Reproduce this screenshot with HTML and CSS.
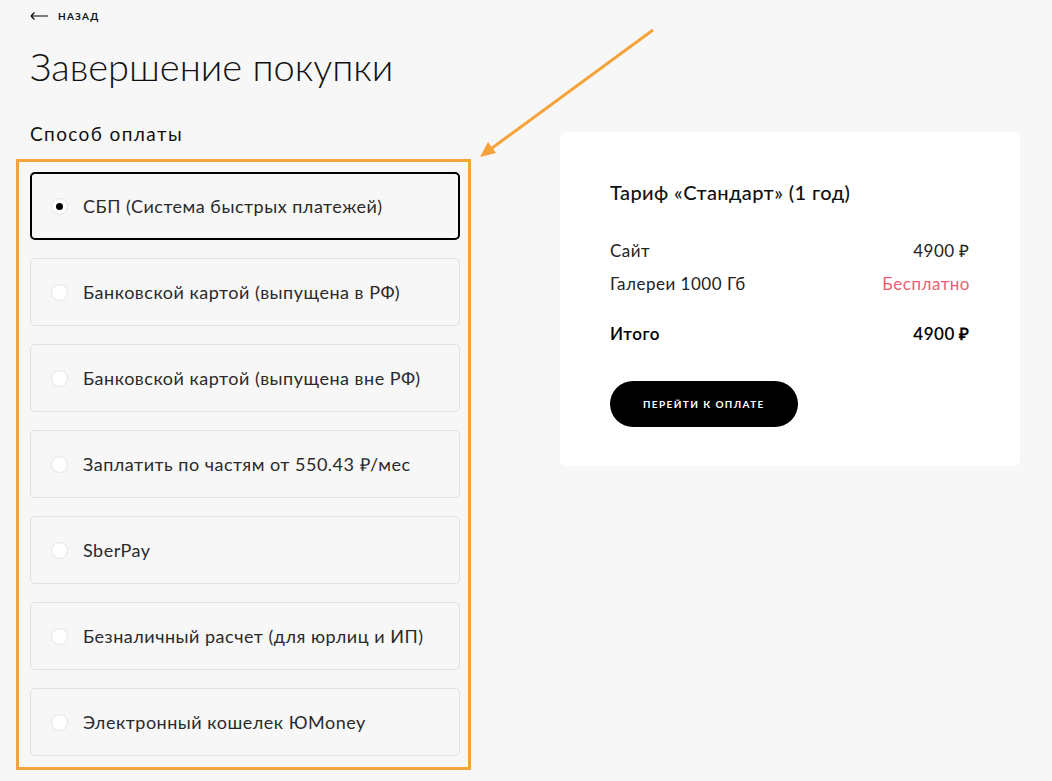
FILE: index.html
```html
<!DOCTYPE html>
<html lang="ru">
<head>
    <meta charset="UTF-8">
    <meta name="viewport" content="width=device-width, initial-scale=1.0">
    <title>Завершение покупки</title>
    <link rel="stylesheet" href="styles.css">
</head>
<body>
    <a class="back" href="#">
        <svg width="18" height="8" viewBox="0 0 18 8"><path d="M1 4H18M1 4L4.5 0.5M1 4L4.5 7.5" stroke="#000" stroke-width="1.2" fill="none"/></svg>
        <span>Назад</span>
    </a>
    <h1>Завершение покупки</h1>
    <main class="checkout">
        <section class="methods">
            <h2>Способ оплаты</h2>
            <div class="highlight">
                <label class="method selected"><span class="radio"></span>СБП (Система быстрых платежей)</label>
                <label class="method"><span class="radio"></span>Банковской картой (выпущена в РФ)</label>
                <label class="method"><span class="radio"></span>Банковской картой (выпущена вне РФ)</label>
                <label class="method"><span class="radio"></span>Заплатить по частям от 550.43 ₽/мес</label>
                <label class="method"><span class="radio"></span>SberPay</label>
                <label class="method"><span class="radio"></span>Безналичный расчет (для юрлиц и ИП)</label>
                <label class="method"><span class="radio"></span>Электронный кошелек ЮMoney</label>
            </div>
        </section>
        <aside class="summary">
            <h3>Тариф «Стандарт» (1 год)</h3>
            <div class="row"><span>Сайт</span><span>4900 ₽</span></div>
            <div class="row"><span>Галереи 1000 Гб</span><span class="free">Бесплатно</span></div>
            <div class="row total"><span>Итого</span><span>4900 ₽</span></div>
            <button class="btn">Перейти к оплате</button>
        </aside>
    </main>
    <svg class="pointer" width="200" height="140" viewBox="0 0 200 140">
        <path d="M193 10L28 131" stroke="#f5a33b" stroke-width="3" fill="none"/>
        <path d="M20 137L28 122L36 133Z" fill="#f5a33b"/>
    </svg>
</body>
</html>
```

FILE: styles.css
```css
body {
    font-family: 'Lato', 'Open Sans', sans-serif;
    background-color: #f7f7f7;
    color: #111;
    margin: 0;
    padding: 0 30px;
    position: relative;
    min-height: 781px;
}
.back {
    display: flex;
    align-items: center;
    gap: 10px;
    padding-top: 10px;
    height: 12px;
    color: #111;
    text-decoration: none;
    font-size: 10px;
    font-weight: 700;
    letter-spacing: 1.2px;
    text-transform: uppercase;
}
h1 {
    margin: 22px 0 0;
    font-size: 38px;
    font-weight: 300;
    line-height: 44px;
}
.checkout {
    display: flex;
    align-items: flex-start;
    gap: 100px;
    margin-top: 35px;
}
.methods {
    width: 430px;
}
h2 {
    margin: 0 0 14px;
    font-size: 19px;
    font-weight: 400;
    line-height: 22px;
    letter-spacing: 1.4px;
}
.highlight {
    margin: 0 -11px 0 -14px;
    padding: 10px 8px 11px 11px;
    border: 3px solid #f5a33b;
    display: flex;
    flex-direction: column;
    gap: 18px;
}
.method {
    display: flex;
    align-items: center;
    height: 66px;
    padding: 0 20px;
    border: 1px solid #e0e0e0;
    border-radius: 5px;
    font-size: 18px;
    letter-spacing: 0.5px;
    color: #2a2a2a;
    cursor: pointer;
}
.method.selected {
    border: 2px solid #000;
    height: 64px;
    padding: 0 19px;
}
.radio {
    width: 15px;
    height: 15px;
    border: 1px solid #e3e3e3;
    border-radius: 50%;
    background: #fff;
    margin-right: 15px;
    display: flex;
    align-items: center;
    justify-content: center;
    flex-shrink: 0;
}
.selected .radio::after {
    content: "";
    width: 7px;
    height: 7px;
    border-radius: 50%;
    background: #000;
}
.summary {
    width: 360px;
    margin-top: 9px;
    padding: 48px 50px 39px;
    background: #fff;
    border-radius: 6px;
}
h3 {
    margin: 0 0 37px;
    font-size: 20px;
    font-weight: 500;
    line-height: 24px;
    letter-spacing: 0.4px;
}
.row {
    display: flex;
    justify-content: space-between;
    font-size: 17px;
    letter-spacing: 0.5px;
    line-height: 20px;
    margin-bottom: 13px;
    color: #222;
}
.row .free {
    color: #ec5f72;
}
.row.total {
    margin-top: 30px;
    margin-bottom: 37px;
    font-weight: 600;
    font-size: 17px;
    color: #000;
}
.btn {
    background-color: #000;
    color: #fff;
    border: none;
    border-radius: 23px;
    height: 46px;
    padding: 0 33px;
    font-family: inherit;
    font-size: 10px;
    font-weight: 700;
    letter-spacing: 1.4px;
    text-transform: uppercase;
    cursor: pointer;
}
.pointer {
    position: absolute;
    left: 460px;
    top: 20px;
}
```
